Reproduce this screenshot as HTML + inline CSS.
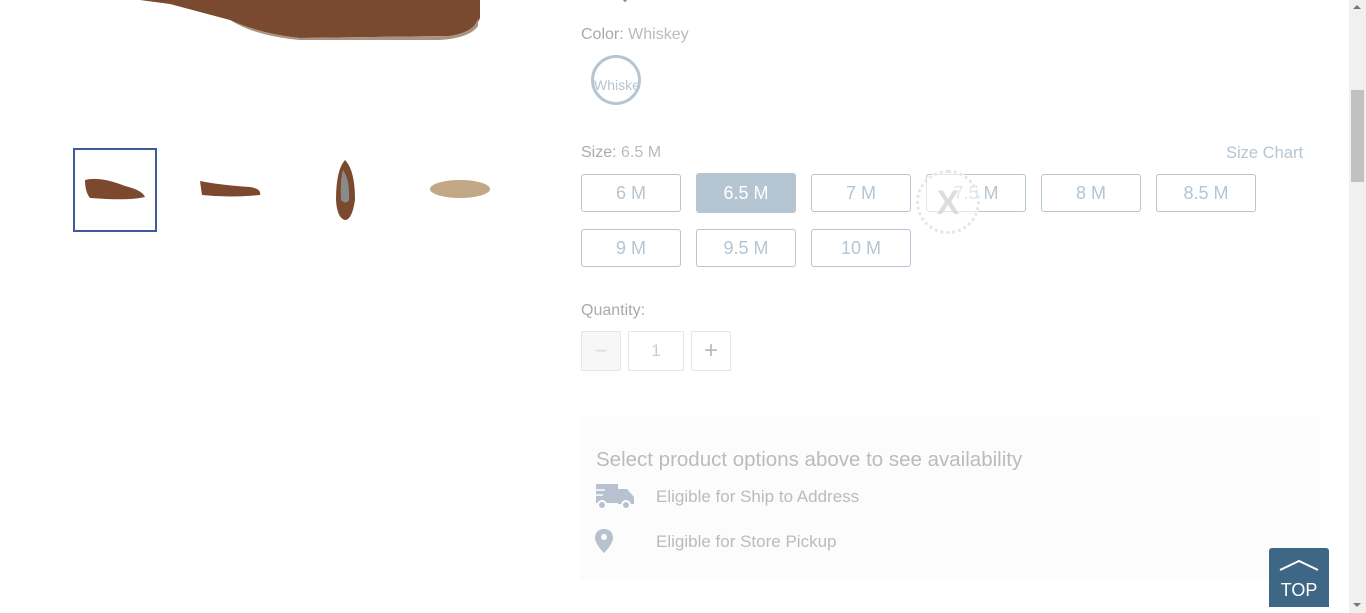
<!DOCTYPE html>
<html><head><style>
*{margin:0;padding:0;box-sizing:border-box}
body{width:1366px;height:613px;overflow:hidden;background:#fff;font-family:"Liberation Sans",sans-serif;position:relative}
.a{position:absolute}
.lbl{font-size:16px;color:#b0b0b0}
.sz{position:absolute;width:100px;height:38px;border:1px solid #b5c5d2;border-radius:3px;color:#b5c5d2;font-size:18px;text-align:center;line-height:37px}
</style></head><body>
<svg class="a" style="left:0;top:0" width="560" height="240">
<path d="M140 0 L480 0 L480 18 Q475 32 450 36 L300 38 Q260 34 230 20 L170 4 Z" fill="#7a4a30"/>
<path d="M230 20 Q260 34 300 38 L450 36 Q475 32 478 18 L478 26 Q470 38 440 40 L300 40 Q255 36 230 20Z" fill="#a89480"/>
<rect x="74" y="149" width="82" height="82" fill="none" stroke="#3d5a99" stroke-width="2"/>
<path d="M85 180 Q100 176 125 186 Q142 190 145 197 Q130 201 90 198 Q85 192 85 180Z" fill="#7b4a2e"/>
<path d="M200 181 Q220 185 250 187 Q262 189 260 195 Q230 198 202 195Z" fill="#7b4a2e"/>
<path d="M345 160 Q355 170 355 200 Q352 220 345 220 Q337 218 336 200 Q336 170 345 160Z" fill="#7b4a2e"/>
<path d="M343 170 Q350 180 349 200 Q346 205 341 200 Q340 180 343 170Z" fill="#8a8a8a"/>
<ellipse cx="460" cy="189" rx="30" ry="9" fill="#c2a886"/>
</svg>
<div class="a" style="width:10px;height:10px;border-right:2px solid #888;border-bottom:2px solid #888;transform:rotate(45deg);left:620px;top:-10px"></div>
<div class="a lbl" style="left:581px;top:26px"><span style="color:#aaa">Color:</span> <span style="color:#bbb">Whiskey</span></div>
<div class="a" style="left:591px;top:55px;width:50px;height:50px;border:3px solid #b5c5d2;border-radius:50%;overflow:hidden;font-size:14px;color:#b5c5d2;line-height:54px;text-align:center">Whiske</div>
<div class="a lbl" style="left:581px;top:144px"><span style="color:#aaa">Size:</span> <span style="color:#bbb">6.5 M</span></div>
<div class="a" style="left:1226px;top:144px;font-size:16.5px;color:#b5c5d2">Size Chart</div>
<div class="sz" style="left:581px;top:174px">6 M</div>
<div class="sz" style="left:696px;top:173px;height:40px;line-height:40px;background:#b5c5d2;color:#fff;border:none">6.5 M</div>
<div class="sz" style="left:811px;top:174px">7 M</div>
<div class="sz" style="left:926px;top:174px">7.5 M</div>
<div class="sz" style="left:1041px;top:174px">8 M</div>
<div class="sz" style="left:1156px;top:174px">8.5 M</div>
<div class="sz" style="left:581px;top:229px">9 M</div>
<div class="sz" style="left:696px;top:229px">9.5 M</div>
<div class="sz" style="left:811px;top:229px">10 M</div>
<div class="a" style="left:916px;top:170px;width:64px;height:64px;border:3px dotted #e6e6e6;border-radius:50%;background:rgba(255,255,255,.6);text-align:center;line-height:60px;font-size:34px;font-weight:bold;color:#ddd">X</div>
<div class="a lbl" style="left:581px;top:302px;color:#aaa">Quantity:</div>
<div class="a" style="left:581px;top:331px;width:40px;height:40px;border:1px solid #e6e6e6;background:#f7f7f7;border-radius:2px;color:#ddd;font-size:22px;text-align:center;line-height:38px">−</div>
<div class="a" style="left:628px;top:331px;width:56px;height:40px;border:1px solid #e6e6e6;border-radius:2px;color:#ccc;font-size:17px;text-align:center;line-height:38px">1</div>
<div class="a" style="left:691px;top:331px;width:40px;height:40px;border:1px solid #e6e6e6;border-radius:2px;color:#bbb;font-size:24px;text-align:center;line-height:38px">+</div>
<div class="a" style="left:580px;top:416px;width:740px;height:163px;background:#fcfcfc"></div>
<div class="a" style="left:596px;top:448px;font-size:20.5px;color:#bbb">Select product options above to see availability</div>
<svg class="a" style="left:595px;top:484px" width="40" height="26"><rect x="1" y="0" width="22" height="19" fill="#b8c1cf"/><path d="M23 5 H32 L39 13 V20 H23Z" fill="#b8c1cf"/><circle cx="7" cy="21" r="4" fill="#b8c1cf" stroke="#fff" stroke-width="2"/><circle cx="31" cy="21" r="4" fill="#b8c1cf" stroke="#fff" stroke-width="2"/><line x1="0" y1="6" x2="10" y2="6" stroke="#fff" stroke-width="1.5"/><line x1="0" y1="11" x2="8" y2="11" stroke="#fff" stroke-width="1.5"/></svg>
<div class="a" style="left:656px;top:487px;font-size:17px;color:#bbb">Eligible for Ship to Address</div>
<svg class="a" style="left:595px;top:529px" width="20" height="26"><path d="M9 0 C3 0 0 4 0 9 C0 15 9 24 9 24 C9 24 18 15 18 9 C18 4 15 0 9 0Z" fill="#b8c1cf"/><circle cx="9" cy="8" r="3" fill="#fcfcfc"/></svg>
<div class="a" style="left:656px;top:532px;font-size:17px;color:#bbb">Eligible for Store Pickup</div>
<div class="a" style="left:1269px;top:548px;width:60px;height:59px;background:#3d6785;border-radius:3px 3px 0 0"></div>
<svg class="a" style="left:1269px;top:548px" width="60" height="30"><path d="M11 22 L30 13 L49 22" fill="none" stroke="#fff" stroke-width="2"/></svg>
<div class="a" style="left:1269px;top:580px;width:60px;text-align:center;color:#fff;font-size:18px">TOP</div>
<div class="a" style="left:1349px;top:0;width:17px;height:613px;background:#f0f0f0"></div>
<div class="a" style="left:1351px;top:90px;width:13px;height:92px;background:#c1c1c1"></div>
<div class="a" style="left:1353px;top:5px;width:0;height:0;border-left:4px solid transparent;border-right:4px solid transparent;border-bottom:4px solid #777"></div>
<div class="a" style="left:1353px;top:603px;width:0;height:0;border-left:4px solid transparent;border-right:4px solid transparent;border-top:4px solid #777"></div>
</body></html>
